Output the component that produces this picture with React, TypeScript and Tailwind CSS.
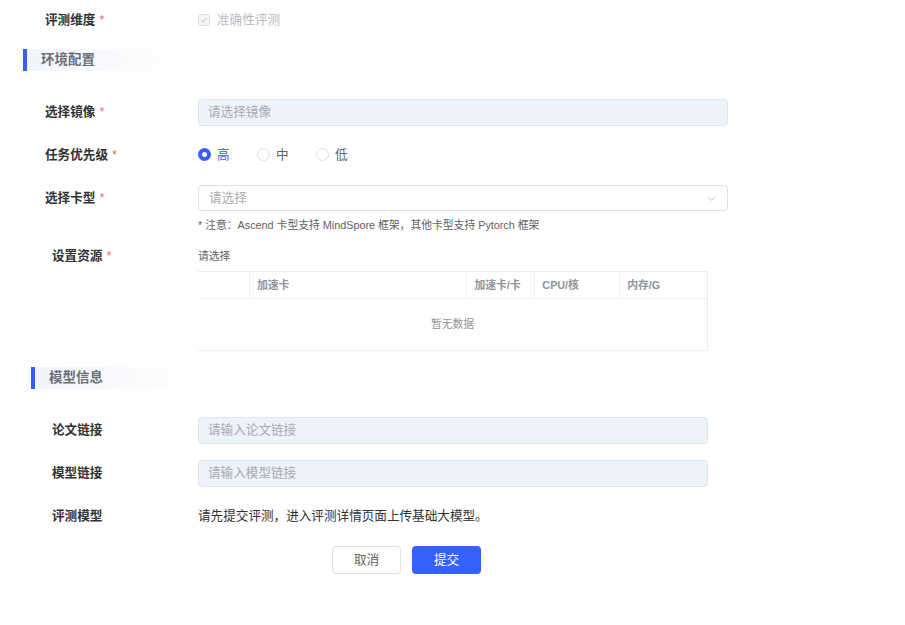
import * as React from "react";

const font = { fontFamily: '"Liberation Sans", "Noto Sans CJK SC", sans-serif' };

function Label({ text, required, indent }: { text: string; required?: boolean; indent?: boolean }) {
  return (
    <div className={`${indent ? "pl-[52px]" : "pl-[45px]"} w-[198px] shrink-0 flex items-center text-[12.6px] font-bold text-[#303133]`}>
      <span>{text}</span>
      {required && <span className="ml-[4px] text-[#f56c6c] font-normal">*</span>}
    </div>
  );
}

function SectionTitle({ title, offset }: { title: string; offset: string }) {
  return (
    <div className={`${offset} flex`}>
      <div className="flex h-[22px] w-[165px] items-center bg-gradient-to-r from-[#f1f4f9] to-white">
        <div className="h-full w-[4px] bg-[#3a5cff]" />
        <span className="ml-[14px] text-[13.5px] font-bold text-[#6b6e75]">{title}</span>
      </div>
    </div>
  );
}

function DisabledInput({ placeholder, width }: { placeholder: string; width: string }) {
  return (
    <div className={`${width} h-[27px] flex items-center rounded-[4px] border border-[#dfe4ee] bg-[#eef2f9] pl-[9px] text-[12.6px] text-[#a8abb2]`}>
      {placeholder}
    </div>
  );
}

function Radio({ label, checked }: { label: string; checked?: boolean }) {
  return (
    <div className="flex items-center gap-[6px] w-[59px]">
      {checked ? (
        <span className="flex h-[13px] w-[13px] items-center justify-center rounded-full bg-[#3a5cff]">
          <span className="h-[5px] w-[5px] rounded-full bg-white" />
        </span>
      ) : (
        <span className="h-[13px] w-[13px] rounded-full border border-[#dcdfe6] bg-white" />
      )}
      <span className={`text-[12.6px] ${checked ? "text-[#3a5cff]" : "text-[#606266]"}`}>{label}</span>
    </div>
  );
}

const columns = [
  { name: "", w: "w-[52px]" },
  { name: "加速卡", w: "w-[218px]" },
  { name: "加速卡/卡", w: "w-[68px]" },
  { name: "CPU/核", w: "w-[85px]" },
  { name: "内存/G", w: "w-[87px]" },
];

export default function App() {
  return (
    <div className="w-[905px] h-[625px] bg-white" style={font}>
      <div className="flex flex-col">
        {/* 评测维度 */}
        <div className="mt-[7px] flex h-[26px]">
          <Label text="评测维度" required />
          <div className="flex items-center gap-[7px]">
            <span className="flex h-[12px] w-[12px] items-center justify-center rounded-[2px] border border-[#dcdfe6] bg-[#f2f5fa]">
              <svg viewBox="0 0 12 12" className="h-[10px] w-[10px]" fill="none" stroke="#c0c4cc" strokeWidth="1.2">
                <path d="M2.5 6.2 L5 8.5 L9.5 3.5" />
              </svg>
            </span>
            <span className="text-[12.6px] text-[#b8bbc2]">准确性评测</span>
          </div>
        </div>

        <SectionTitle title="环境配置" offset="mt-[16px] pl-[23px]" />

        {/* 选择镜像 */}
        <div className="mt-[28px] flex h-[27px]">
          <Label text="选择镜像" required />
          <DisabledInput placeholder="请选择镜像" width="w-[530px]" />
        </div>

        {/* 任务优先级 */}
        <div className="mt-[15px] flex h-[28px]">
          <Label text="任务优先级" required />
          <div className="flex items-center">
            <Radio label="高" checked />
            <Radio label="中" />
            <Radio label="低" />
          </div>
        </div>

        {/* 选择卡型 */}
        <div className="mt-[16px] flex h-[26px]">
          <Label text="选择卡型" required />
          <div className="w-[530px] h-[26px] flex items-center justify-between rounded-[4px] border border-[#dcdfe6] bg-white pl-[10px] pr-[10px]">
            <span className="text-[12.6px] text-[#a8abb2]">请选择</span>
            <svg viewBox="0 0 12 12" className="h-[11px] w-[11px]" fill="none" stroke="#b8bbc2" strokeWidth="1">
              <path d="M2 4.5 L6 8 L10 4.5" />
            </svg>
          </div>
        </div>
        <div className="mt-[7px] flex h-[14px] items-center pl-[198px] text-[10.8px] text-[#606266]">
          * 注意：Ascend 卡型支持 MindSpore 框架，其他卡型支持 Pytorch 框架
        </div>

        {/* 设置资源 */}
        <div className="mt-[17px] flex">
          <div className="h-[14px] flex">
            <Label text="设置资源" required indent />
          </div>
          <div className="flex flex-col">
            <div className="h-[14px] flex items-center text-[10.8px] text-[#606266]">请选择</div>
            <div className="mt-[8px] w-[510px] border-t border-r border-b border-[#e9ecf3]">
              <div className="flex h-[27px] border-b border-[#eef0f5]">
                {columns.map((c, i) => (
                  <div
                    key={i}
                    className={`${c.w} flex items-center pl-[7px] text-[10.8px] font-bold text-[#909399] ${i < columns.length - 1 ? "border-r border-[#eef0f5]" : ""}`}
                  >
                    {c.name}
                  </div>
                ))}
              </div>
              <div className="flex h-[51px] items-center justify-center text-[10.8px] text-[#909399]">暂无数据</div>
            </div>
          </div>
        </div>

        <SectionTitle title="模型信息" offset="mt-[16px] pl-[31px]" />

        {/* 论文链接 */}
        <div className="mt-[28px] flex h-[27px]">
          <Label text="论文链接" indent />
          <DisabledInput placeholder="请输入论文链接" width="w-[510px]" />
        </div>

        {/* 模型链接 */}
        <div className="mt-[16px] flex h-[27px]">
          <Label text="模型链接" indent />
          <DisabledInput placeholder="请输入模型链接" width="w-[510px]" />
        </div>

        {/* 评测模型 */}
        <div className="mt-[16px] flex h-[27px]">
          <Label text="评测模型" indent />
          <div className="flex items-center text-[12.6px] text-[#303133]">请先提交评测，进入评测详情页面上传基础大模型。</div>
        </div>

        <div className="mt-[16px] flex gap-[11px] pl-[332px]">
          <button className="h-[28px] w-[69px] rounded-[4px] border border-[#dcdfe6] bg-white text-[12.6px] text-[#606266]">取消</button>
          <button className="h-[28px] w-[69px] rounded-[4px] bg-[#3661ff] text-[12.6px] text-white">提交</button>
        </div>
      </div>
    </div>
  );
}
